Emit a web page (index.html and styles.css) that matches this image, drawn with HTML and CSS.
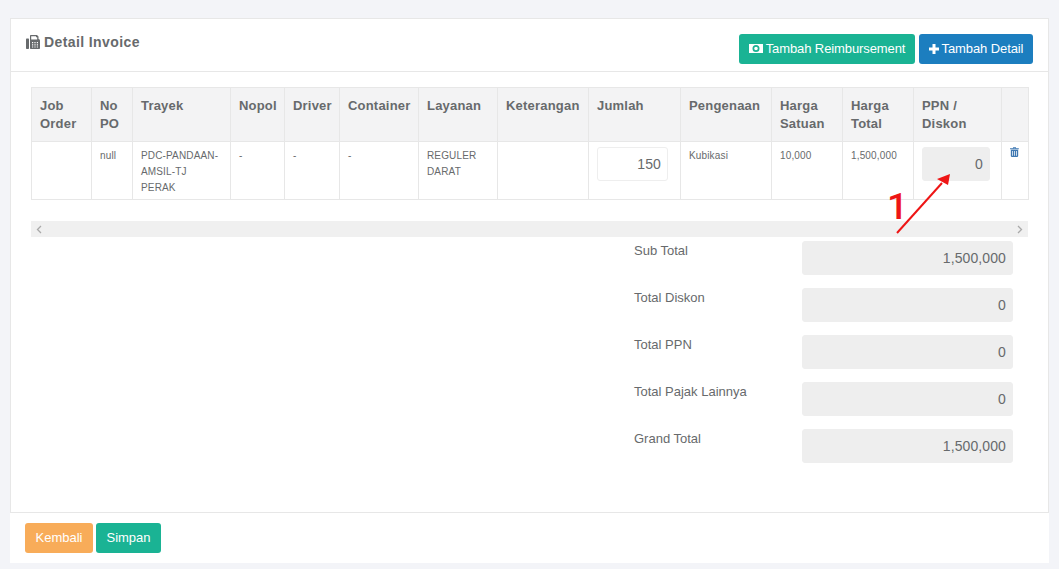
FILE: index.html
```html
<!DOCTYPE html>
<html lang="en">
<head>
  <meta charset="UTF-8" />
  <title>Detail Invoice</title>
  <link rel="stylesheet" href="styles.css">
</head>
<body>
  <!-- Detail card -->
  <section class="panel">
    <header class="panel-head">
      <h2 class="panel-title">
        <svg class="icon-fax" viewBox="0 0 14 14" width="14" height="14">
          <path fill="#676a6c" d="M0 4.5C0 3.9.4 3.5 1 3.5h1c.6 0 1 .4 1 1V13c0 .6-.4 1-1 1H1c-.6 0-1-.4-1-1V4.500z"/>
          <path fill="#676a6c" fill-rule="evenodd" d="M4 1c0-.6.4-1 1-1h6l1.500 1.500V4c.9.100 1.500.7 1.500 1.500V13c0 .6-.4 1-1 1H5c-.6 0-1-.4-1-1V1zm1.200.2v3.300h6V2.200h-1.200V1.200H5.200zM6 7v1.200h1.200V7H6zm2.400 0v1.200h1.200V7H8.400zm2.400 0v1.200H12V7h-1.200zM6 9.200v1.200h1.200V9.200H6zm2.400 0v1.200h1.200V9.200H8.400zm2.400 0v1.200H12V9.200h-1.200zM6 11.400v1.200h1.200v-1.200H6zm2.400 0v1.200h1.200v-1.200H8.400zm2.400 0v1.200H12v-1.200h-1.200z"/>
        </svg>
        Detail Invoice
      </h2>
      <div class="panel-actions">
        <button class="btn btn-green" type="button">
          <svg viewBox="0 0 14 9" width="14" height="9">
            <path fill="#fff" fill-rule="evenodd" d="M0 0h14v9H0V0zm7 1a3.500 3.500 0 1 0 0 7 3.500 3.500 0 0 0 0-7zm0 1.700a1.800 1.800 0 1 1 0 3.600 1.800 1.800 0 0 1 0-3.600z"/>
          </svg>
          <span>Tambah Reimbursement</span>
        </button>
        <button class="btn btn-blue" type="button">
          <svg viewBox="0 0 10 10" width="10" height="10">
            <path fill="#fff" d="M3.500 0h3v3.500H10v3H6.500V10h-3V6.500H0v-3h3.500z"/>
          </svg>
          <span>Tambah Detail</span>
        </button>
      </div>
    </header>

    <div class="panel-body">
      <table class="detail-table">
        <colgroup>
          <col class="c-job"><col class="c-po"><col class="c-trayek"><col class="c-nopol">
          <col class="c-driver"><col class="c-container"><col class="c-layanan"><col class="c-ket">
          <col class="c-jumlah"><col class="c-kena"><col class="c-satuan"><col class="c-total">
          <col class="c-ppn"><col class="c-del">
        </colgroup>
        <thead>
          <tr>
            <th>Job Order</th>
            <th>No PO</th>
            <th>Trayek</th>
            <th>Nopol</th>
            <th>Driver</th>
            <th>Container</th>
            <th>Layanan</th>
            <th>Keterangan</th>
            <th>Jumlah</th>
            <th>Pengenaan</th>
            <th>Harga Satuan</th>
            <th>Harga Total</th>
            <th>PPN / Diskon</th>
            <th></th>
          </tr>
        </thead>
        <tbody>
          <tr>
            <td></td>
            <td>null</td>
            <td>PDC-PANDAAN-AMSIL-TJ PERAK</td>
            <td>-</td>
            <td>-</td>
            <td>-</td>
            <td>REGULER DARAT</td>
            <td></td>
            <td class="td-input td-qty"><input class="field field-small" type="text" value="150"></td>
            <td>Kubikasi</td>
            <td>10,000</td>
            <td>1,500,000</td>
            <td class="td-input"><input class="field field-small" type="text" value="0" readonly></td>
            <td class="td-del">
              <svg viewBox="0 0 11 12" width="9" height="10">
                <path fill="#3f78b2" fill-rule="evenodd" d="M3.500 1.500 4 .3C4.100.1 4.300 0 4.500 0h2c.2 0 .4.100.5.300l.5 1.200h3c.2 0 .3.100.3.300v.7H0v-.7c0-.2.100-.3.300-.3h3.200zm1-.6-.2.6h2.400l-.2-.6h-2zM1 3.200h9v7.800c0 .6-.4 1-1 1H2c-.6 0-1-.4-1-1V3.200zm1.700 1.500v5.800h.9V4.700h-.9zm2.400 0v5.800h.9V4.700h-.9zm2.300 0v5.800h.9V4.700h-.9z"/>
              </svg>
            </td>
          </tr>
        </tbody>
      </table>

      <div class="fake-scroll">
        <svg viewBox="0 0 6 9" width="6" height="9"><path fill="none" stroke="#a9a9a9" stroke-width="1.300" d="M5 1 1.500 4.500 5 8"/></svg>
        <svg viewBox="0 0 6 9" width="6" height="9"><path fill="none" stroke="#a9a9a9" stroke-width="1.300" d="M1 1l3.500 3.500L1 8"/></svg>
      </div>

      <div class="summary">
        <div class="summary-row"><label>Sub Total</label><input class="field" type="text" value="1,500,000" readonly></div>
        <div class="summary-row"><label>Total Diskon</label><input class="field" type="text" value="0" readonly></div>
        <div class="summary-row"><label>Total PPN</label><input class="field" type="text" value="0" readonly></div>
        <div class="summary-row"><label>Total Pajak Lainnya</label><input class="field" type="text" value="0" readonly></div>
        <div class="summary-row"><label>Grand Total</label><input class="field" type="text" value="1,500,000" readonly></div>
      </div>
    </div>

    <!-- Red note drawn over the screenshot -->
    <svg class="note-arrow" viewBox="0 0 60 66" width="60" height="66">
      <path fill="none" stroke="#ee1515" stroke-width="2" d="M1 62 46 12"/>
      <path fill="#ee1515" d="M54 3 52 14 41 8z"/>
    </svg>
    <span class="note-num">1</span>
  </section>

  <footer class="panel-foot">
    <button class="btn btn-orange" type="button">Kembali</button>
    <button class="btn btn-green" type="button">Simpan</button>
  </footer>
</body>
</html>
```

FILE: styles.css
```css
:root {
  --text-color: #676a6c;
  --line-color: #e7e7e7;
  --field-grey: #eeeeee;
  --green: #1ab394;
  --blue: #1c7ebf;
  --orange: #f8ac59;
}

* {
  box-sizing: border-box;
}

html, body {
  height: 100%;
}

body {
  margin: 0;
  padding: 18px 10px 6px;
  background-color: #f3f4f8;
  color: var(--text-color);
  font-family: "Liberation Sans", Arial, sans-serif;
  font-size: 13px;
  overflow: hidden;
}

.panel {
  position: relative;
  height: 495px;
  background: white;
  border: 1px solid var(--line-color);
}

.panel-head {
  display: flex;
  justify-content: space-between;
  height: 53px;
  padding: 15px 15px 0 15px;
  border-bottom: 1px solid var(--line-color);
}

.panel-title {
  display: flex;
  align-items: center;
  gap: 4px;
  height: 16px;
  margin: 0;
  font-size: 14px;
  font-weight: bold;
  letter-spacing: 0.4px;
}

.panel-actions {
  display: flex;
  gap: 4px;
}

.btn {
  display: inline-flex;
  align-items: center;
  justify-content: center;
  gap: 3px;
  height: 30px;
  padding: 0 10.5px 1px;
  border: none;
  border-radius: 3px;
  color: white;
  font-family: inherit;
  font-size: 13px;
  white-space: nowrap;
  cursor: pointer;
}

.btn-green {
  background-color: var(--green);
}

.btn-blue {
  background-color: var(--blue);
}

.btn-orange {
  background-color: var(--orange);
}

.panel-head .btn {
  padding: 0 0 1px;
  letter-spacing: -0.1px;
}

.panel-head .btn-green {
  width: 176px;
}

.panel-head .btn-blue {
  width: 114px;
}

.panel-body {
  padding: 15px 20px 0;
}

.detail-table {
  width: 998px;
  table-layout: fixed;
  border-collapse: collapse;
}

.c-job { width: 60px; }
.c-po { width: 41px; }
.c-trayek { width: 98px; }
.c-nopol { width: 54px; }
.c-driver { width: 55px; }
.c-container { width: 79px; }
.c-layanan { width: 79px; }
.c-ket { width: 91px; }
.c-jumlah { width: 92px; }
.c-kena { width: 91px; }
.c-satuan { width: 71px; }
.c-total { width: 71px; }
.c-ppn { width: 88px; }
.c-del { width: 27px; }

.detail-table th,
.detail-table td {
  border: 1px solid var(--line-color);
  vertical-align: top;
  text-align: left;
}

.detail-table th {
  height: 54px;
  padding: 9px 8px 0;
  background-color: #f3f3f4;
  font-size: 13px;
  line-height: 18px;
  letter-spacing: 0.2px;
}

.detail-table td {
  height: 58px;
  padding: 6px 8px 3px;
  font-size: 10px;
  line-height: 16px;
  letter-spacing: 0.15px;
}

.detail-table .td-input {
  padding: 5px 11px 5px 8px;
}

.detail-table .td-qty {
  padding-right: 12px;
}

.detail-table .td-del {
  padding: 5px 8px 0;
  line-height: 11px;
}

.field {
  display: block;
  width: 100%;
  height: 34px;
  padding: 0 6px;
  border: 1px solid var(--field-grey);
  border-radius: 3px;
  color: var(--text-color);
  font-family: inherit;
  font-size: 14px;
  letter-spacing: 0.1px;
  text-align: right;
  outline: none;
}

.field[readonly] {
  background-color: var(--field-grey);
}

.fake-scroll {
  display: flex;
  justify-content: space-between;
  align-items: center;
  width: 997px;
  height: 16px;
  margin-top: 21px;
  padding: 0 5px;
  background-color: #f0f0f0;
}

.summary {
  display: flex;
  flex-direction: column;
  gap: 13px;
  width: 379px;
  margin: 4px 0 0 603px;
}

.summary-row {
  display: grid;
  grid-template-columns: 168px 211px;
}

.summary-row label {
  padding-top: 2px;
  line-height: 15px;
  font-size: 13px;
}

.note-arrow {
  position: absolute;
  left: 885px;
  top: 152px;
}

.note-num {
  position: absolute;
  left: 876px;
  top: 167px;
  color: #ee1515;
  font-family: Roboto, sans-serif;
  font-size: 37px;
  font-weight: 500;
  line-height: 42px;
}

.panel-foot {
  display: flex;
  align-items: flex-start;
  gap: 3px;
  height: 50px;
  padding: 10px 15px 0;
  background: white;
}
```
